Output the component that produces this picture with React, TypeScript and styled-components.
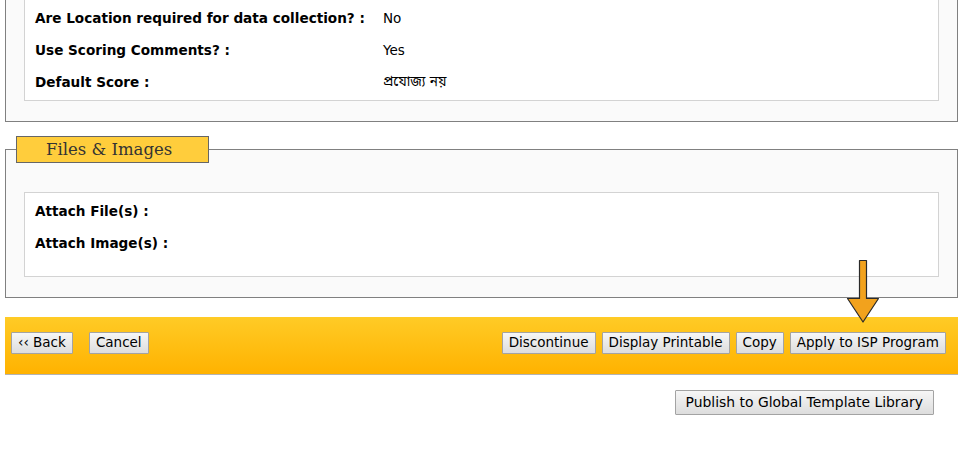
import React from "react";
import styled, { createGlobalStyle } from "styled-components";

const GlobalStyle = createGlobalStyle`
  html, body { margin: 0; padding: 0; background: #ffffff; }
  body { font-family: "DejaVu Sans", Verdana, sans-serif; color: #000; }
`;

const Page = styled.div`
  position: relative;
  width: 953px;
  margin-left: 5px;
`;

const TopPanel = styled.div`
  background: #fafafa;
  border: 1px solid #808080;
  border-top: none;
  padding: 0 18px 20px 18px;
`;

const InfoBox = styled.div<{ $cut?: boolean }>`
  background: #ffffff;
  border: 1px solid #d3d3d3;
  border-top: ${(p) => (p.$cut ? "none" : "1px solid #d3d3d3")};
  padding: 2px 10px ${(p) => (p.$cut ? 2 : 17)}px 10px;
`;

const Row = styled.div`
  display: flex;
  align-items: center;
  height: 32px;
  font-size: 13.6px;
`;

const Label = styled.div`
  width: 348px;
  font-weight: bold;
`;

const Value = styled.div`
  font-family: "DejaVu Sans", "Noto Sans Bengali", "Noto Sans", sans-serif;
  font-size: 13.5px;
`;

const Fieldset = styled.fieldset`
  margin: 14px 0 0 0;
  padding: 0 18px 20px 18px;
  background: #fafafa;
  border: 1px solid #808080;
  min-width: 0;
`;

const Legend = styled.legend`
  margin-left: -8px;
  box-sizing: border-box;
  width: 193px;
  height: 27px;
  padding: 0 0 0 29px;
  background: #ffcd3c;
  border: 1px solid #666666;
  font-family: "DejaVu Serif", Georgia, serif;
  font-size: 16.5px;
  line-height: 25px;
  color: #333333;
`;

const FilesBox = styled(InfoBox)`
  margin-top: 29px;
`;

const Toolbar = styled.div`
  margin-top: 19px;
  display: flex;
  align-items: flex-start;
  justify-content: space-between;
  height: 58px;
  box-sizing: border-box;
  padding: 15px 12px 0 6px;
  background: linear-gradient(#ffcb26, #ffb200);
  border-bottom: 1px solid #b3b3b3;
`;

const ButtonGroup = styled.div<{ $gap: number }>`
  display: flex;
  gap: ${(p) => p.$gap}px;
`;

const Button = styled.button<{ $big?: boolean }>`
  font-family: "DejaVu Sans", Verdana, sans-serif;
  font-size: ${(p) => (p.$big ? 13.9 : 13.5)}px;
  color: #000;
  height: ${(p) => (p.$big ? 25 : 22)}px;
  padding: 0 ${(p) => (p.$big ? 10 : 6)}px;
  background: linear-gradient(#f6f6f6, #dddddd);
  border: 1px solid #a3a3a3;
  border-radius: 1px;
  line-height: 1;
  cursor: pointer;
`;

const PublishRow = styled.div`
  display: flex;
  justify-content: flex-end;
  padding: 15px 24px 0 0;
`;

const ArrowWrap = styled.div`
  position: absolute;
  left: 840px;
  top: 259px;
  width: 36px;
  height: 66px;
`;

const Arrow = () => (
  <ArrowWrap>
    <svg width="36" height="66" viewBox="0 0 36 66">
      <path
        d="M14.5 1.5 H21.5 V39.5 H33.5 L18 63 L2.5 39.5 H14.5 Z"
        fill="#f2a21d"
        stroke="#2a2a2a"
        strokeWidth="1.2"
        strokeLinejoin="round"
      />
    </svg>
  </ArrowWrap>
);

export default function App() {
  return (
    <Page>
      <GlobalStyle />
      <TopPanel>
        <InfoBox $cut>
          <Row>
            <Label>Are Location required for data collection? :</Label>
            <Value>No</Value>
          </Row>
          <Row>
            <Label>Use Scoring Comments? :</Label>
            <Value>Yes</Value>
          </Row>
          <Row>
            <Label>Default Score :</Label>
            <Value>প্রযোজ্য নয়</Value>
          </Row>
        </InfoBox>
      </TopPanel>

      <Fieldset>
        <Legend>Files &amp; Images</Legend>
        <FilesBox>
          <Row>
            <Label>Attach File(s) :</Label>
          </Row>
          <Row>
            <Label>Attach Image(s) :</Label>
          </Row>
        </FilesBox>
      </Fieldset>

      <Toolbar>
        <ButtonGroup $gap={16}>
          <Button>&lsaquo;&lsaquo; Back</Button>
          <Button>Cancel</Button>
        </ButtonGroup>
        <ButtonGroup $gap={6}>
          <Button>Discontinue</Button>
          <Button>Display Printable</Button>
          <Button>Copy</Button>
          <Button>Apply to ISP Program</Button>
        </ButtonGroup>
      </Toolbar>

      <PublishRow>
        <Button $big>Publish to Global Template Library</Button>
      </PublishRow>

      <Arrow />
    </Page>
  );
}
